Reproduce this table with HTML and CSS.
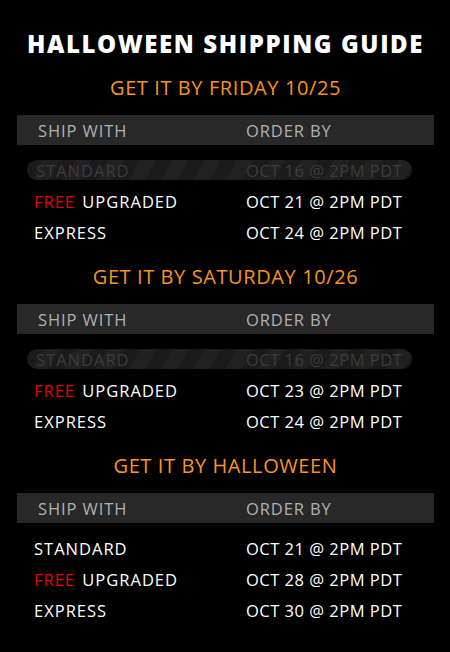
FILE: index.html
```html
<!DOCTYPE html>
<html>
<head>
<meta charset="utf-8">
<link rel="stylesheet" href="styles.css">
</head>
<body>
<main class="guide">
  <h1 class="title">HALLOWEEN SHIPPING GUIDE</h1>

  <section class="section">
    <h2 class="when">GET IT BY FRIDAY 10/25</h2>
    <div class="head"><span class="c1">SHIP WITH</span><span class="c2">ORDER BY</span></div>
    <div class="rows">
      <div class="row off"><span class="c1">STANDARD</span><span class="c2">OCT 16 @ 2PM PDT</span></div>
      <div class="row"><span class="c1"><span class="free">FREE</span> UPGRADED</span><span class="c2">OCT 21 @ 2PM PDT</span></div>
      <div class="row"><span class="c1">EXPRESS</span><span class="c2">OCT 24 @ 2PM PDT</span></div>
    </div>
  </section>

  <section class="section">
    <h2 class="when">GET IT BY SATURDAY 10/26</h2>
    <div class="head"><span class="c1">SHIP WITH</span><span class="c2">ORDER BY</span></div>
    <div class="rows">
      <div class="row off"><span class="c1">STANDARD</span><span class="c2">OCT 16 @ 2PM PDT</span></div>
      <div class="row"><span class="c1"><span class="free">FREE</span> UPGRADED</span><span class="c2">OCT 23 @ 2PM PDT</span></div>
      <div class="row"><span class="c1">EXPRESS</span><span class="c2">OCT 24 @ 2PM PDT</span></div>
    </div>
  </section>

  <section class="section">
    <h2 class="when">GET IT BY HALLOWEEN</h2>
    <div class="head"><span class="c1">SHIP WITH</span><span class="c2">ORDER BY</span></div>
    <div class="rows">
      <div class="row"><span class="c1">STANDARD</span><span class="c2">OCT 21 @ 2PM PDT</span></div>
      <div class="row"><span class="c1"><span class="free">FREE</span> UPGRADED</span><span class="c2">OCT 28 @ 2PM PDT</span></div>
      <div class="row"><span class="c1">EXPRESS</span><span class="c2">OCT 30 @ 2PM PDT</span></div>
    </div>
  </section>
</main>
</body>
</html>
```

FILE: styles.css
```css
html, body {
  margin: 0;
  padding: 0;
  background: #000;
}
body {
  width: 450px;
  height: 652px;
  overflow: hidden;
  font-family: "Open Sans", "Liberation Sans", sans-serif;
  color: #fff;
}
.guide {
  padding: 28px 16px 0 17px;
}
.title {
  margin: 0;
  height: 32px;
  line-height: 32px;
  font-size: 24px;
  font-weight: 800;
  text-align: center;
  letter-spacing: 1.6px;
}
.section {
  display: flex;
  flex-direction: column;
}
.when {
  margin: 0;
  height: 55px;
  line-height: 56px;
  font-size: 20px;
  font-weight: 400;
  color: #f7941d;
  text-align: center;
  letter-spacing: 0.6px;
}
.head {
  display: flex;
  height: 30px;
  align-items: center;
  background: #282828;
  color: #b0b0b0;
  font-size: 16.5px;
  letter-spacing: 0.9px;
}
.c1 {
  width: 229px;
  padding-left: 21px;
  box-sizing: border-box;
}
.c2 {
  flex: 1;
}
.rows {
  display: flex;
  flex-direction: column;
  gap: 11px;
  padding-top: 15px;
  margin-bottom: 7px;
}
.row {
  display: flex;
  align-items: center;
  height: 20px;
  font-size: 16.5px;
  color: #fff;
}
.row .c1 {
  padding-left: 17px;
  letter-spacing: 1px;
}
.row .c2 {
  letter-spacing: 0.5px;
}
.row.off {
  margin: 0 22px 0 10px;
  border-radius: 10px;
  color: #3c3c3c;
  background: repeating-linear-gradient(120deg, #1b1b1b 0 14px, #212121 14px 28px);
}
.row.off .c1 {
  width: 219px;
  padding-left: 9px;
}
.free {
  color: #e50000;
  margin-right: 2px;
}
```
